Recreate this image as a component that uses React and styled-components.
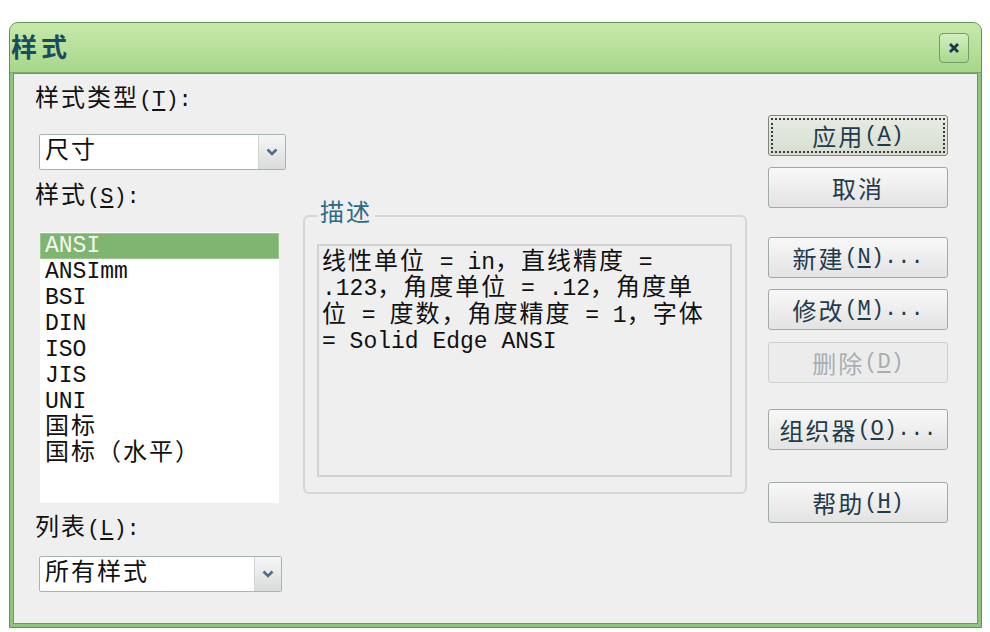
import React from 'react'
import styled, { createGlobalStyle } from 'styled-components'

const GlobalStyle = createGlobalStyle`
  body {
    margin: 0;
    background: #ffffff;
    font-family: "Liberation Mono", "Noto Sans CJK SC", monospace;
    font-size: 22px;
    color: #111;
  }
`

const Han = styled.span`
  font-family: "Noto Sans CJK SC", sans-serif;
  font-size: 24px;
  letter-spacing: 2px;
  line-height: 0;
`

// CJK runs get the wide font, the rest stays monospace
const mix = (text) =>
  text.split(/([\u3000-\u9fff\uff00-\uffef]+)/).map((part, i) =>
    i % 2 ? <Han key={i}>{part}</Han> : part
  )

const Window = styled.div`
  margin: 22px 0 0 9px;
  width: 973px;
  height: 606px;
  box-sizing: border-box;
  border: 1px solid #5f9354;
  border-radius: 9px 9px 0 0;
  background: #8fc47c;
  display: flex;
  flex-direction: column;
  overflow: hidden;
`

const TitleBar = styled.div`
  height: 49px;
  display: flex;
  align-items: center;
  justify-content: space-between;
  padding: 0 12px 0 1px;
  background: linear-gradient(#c6e9ab, #a8d788);
  border-bottom: 1px solid #79aa6a;
`

const Title = styled.div`
  font-family: "Noto Sans CJK SC", sans-serif;
  font-weight: 700;
  font-size: 26px;
  letter-spacing: 4px;
  color: #1b4c5e;
  line-height: 30px;
  margin-top: -3px;
`

const CloseButton = styled.div`
  width: 30px;
  height: 30px;
  box-sizing: border-box;
  border: 1px solid #6f9f64;
  border-radius: 4px;
  background: linear-gradient(#d2efbe, #a9d88f);
  display: flex;
  align-items: center;
  justify-content: center;
`

const Client = styled.div`
  flex: 1;
  margin: 0 3px 3px;
  background: #efefef;
  border: 1px solid #689b5c;
  display: flex;
  align-items: flex-start;
  padding: 14px 0 0 21px;
`

const LeftColumn = styled.div`
  width: 251px;
  display: flex;
  flex-direction: column;
`

const Label = styled.div`
  line-height: 26px;
  height: 26px;
  margin-top: ${({ $mt }) => $mt || 0}px;
  white-space: nowrap;
  u { text-decoration-thickness: 2px; text-underline-offset: 3px; }
`

const Combo = styled.div`
  margin: ${({ $mt }) => $mt}px 0 0 4px;
  width: ${({ $w }) => $w}px;
  height: 36px;
  box-sizing: border-box;
  border: 1px solid #a7b5ad;
  border-radius: 2px;
  background: #ffffff;
  display: flex;
`

const ComboText = styled.div`
  flex: 1;
  padding-left: 5px;
  line-height: 35px;
`

const ComboButton = styled.div`
  width: 26px;
  border-left: 1px solid #cfd6d2;
  background: linear-gradient(#f6f6f6, #d9dcdb);
  display: flex;
  align-items: center;
  justify-content: center;
`

const List = styled.div`
  margin: 21px 0 0 5px;
  width: 239px;
  height: 271px;
  box-sizing: border-box;
  padding-top: 1px;
  background: #ffffff;
  font-size: 23px;
`

const ListItem = styled.div`
  line-height: 26px;
  height: 26px;
  padding-left: 5px;
  background: ${({ $selected }) => ($selected ? '#80b571' : 'transparent')};
  color: ${({ $selected }) => ($selected ? '#f4f8ee' : '#111')};
  box-shadow: ${({ $selected }) => ($selected ? 'inset 0 0 0 1px #9cc890' : 'none')};
`

const MiddleColumn = styled.div`
  margin: 114px 0 0 17px;
  width: 444px;
`

const Group = styled.fieldset`
  margin: 0;
  padding: 0 13px 15px 12px;
  border: 2px solid #d6d6d6;
  border-radius: 6px;
`

const Legend = styled.legend`
  padding: 0 3px;
  line-height: 28px;
  height: 28px;
  color: #2c6b86;
`

const Description = styled.div`
  margin-top: 14px;
  width: 415px;
  height: 233px;
  box-sizing: border-box;
  border: 2px solid #d2d2d2;
  padding: 4px 3px;
  font-size: 23px;
  line-height: 26.4px;
  white-space: pre;
`

const RightColumn = styled.div`
  margin-left: 21px;
  padding-top: 27px;
  width: 180px;
  display: flex;
  flex-direction: column;
`

const Button = styled.div`
  margin-top: ${({ $mt }) => $mt || 0}px;
  height: 41px;
  box-sizing: border-box;
  border: 1px solid ${({ $disabled, $default }) => ($disabled ? '#cdd1cd' : $default ? '#7e877e' : '#a2aba3')};
  border-radius: 3px;
  background: ${({ $disabled, $default }) =>
    $disabled ? '#ececec' : $default ? 'linear-gradient(#e8ece3, #d8ded2)' : 'linear-gradient(#f8f8f8, #e2e3e2)'};
  color: ${({ $disabled }) => ($disabled ? '#a9aeb1' : '#1f3b4d')};
  outline: ${({ $default }) => ($default ? '2px dotted #3a3a3a' : 'none')};
  outline-offset: -5px;
  display: flex;
  align-items: center;
  justify-content: center;
  line-height: 30px;
  white-space: nowrap;
  u { text-decoration-thickness: 2px; text-underline-offset: 3px; }
`

const Chevron = () => (
  <svg width="12" height="8" viewBox="0 0 12 8">
    <path d="M1.5 1.5 L6 6 L10.5 1.5" fill="none" stroke="#4d6d89" strokeWidth="2.6" />
  </svg>
)

const CloseIcon = () => (
  <svg width="12" height="12" viewBox="0 0 12 12">
    <path d="M2 2 L10 10 M10 2 L2 10" stroke="#1e3552" strokeWidth="2.8" />
  </svg>
)

const Access = ({ text, hot, after = '' }) => (
  <>
    {mix(text)}(<u>{hot}</u>){after}
  </>
)

const styles = ['ANSI', 'ANSImm', 'BSI', 'DIN', 'ISO', 'JIS', 'UNI', '国标', '国标（水平）']

const descLines = [
  '线性单位 = in，直线精度 =',
  '.123，角度单位 = .12，角度单',
  '位 = 度数，角度精度 = 1，字体',
  '= Solid Edge ANSI',
]

const buttons = [
  { text: '应用', hot: 'A', mt: 0, isDefault: true },
  { text: '取消', mt: 11 },
  { text: '新建', hot: 'N', after: '...', mt: 29 },
  { text: '修改', hot: 'M', after: '...', mt: 11 },
  { text: '删除', hot: 'D', mt: 12, disabled: true },
  { text: '组织器', hot: 'O', after: '...', mt: 26 },
  { text: '帮助', hot: 'H', mt: 32 },
]

export default function App() {
  return (
    <>
      <GlobalStyle />
      <Window>
        <TitleBar>
          <Title>样式</Title>
          <CloseButton><CloseIcon /></CloseButton>
        </TitleBar>
        <Client>
          <LeftColumn>
            <Label><Access text="样式类型" hot="T" after=":" /></Label>
            <Combo $mt={20} $w={247}>
              <ComboText>{mix('尺寸')}</ComboText>
              <ComboButton><Chevron /></ComboButton>
            </Combo>
            <Label $mt={15}><Access text="样式" hot="S" after=":" /></Label>
            <List>
              {styles.map((s, i) => (
                <ListItem key={s} $selected={i === 0}>{mix(s)}</ListItem>
              ))}
            </List>
            <Label $mt={14}><Access text="列表" hot="L" after=":" /></Label>
            <Combo $mt={13} $w={243}>
              <ComboText>{mix('所有样式')}</ComboText>
              <ComboButton><Chevron /></ComboButton>
            </Combo>
          </LeftColumn>

          <MiddleColumn>
            <Group>
              <Legend>{mix('描述')}</Legend>
              <Description>
                {descLines.map((line) => (
                  <div key={line}>{mix(line)}</div>
                ))}
              </Description>
            </Group>
          </MiddleColumn>

          <RightColumn>
            {buttons.map((b) => (
              <Button key={b.text} $mt={b.mt} $default={b.isDefault} $disabled={b.disabled}>
                {b.hot ? <Access text={b.text} hot={b.hot} after={b.after} /> : mix(b.text)}
              </Button>
            ))}
          </RightColumn>
        </Client>
      </Window>
    </>
  )
}
